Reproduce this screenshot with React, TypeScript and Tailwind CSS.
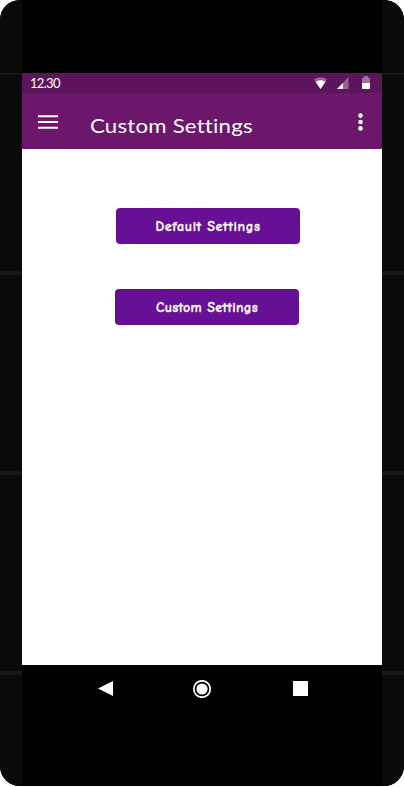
function Bezel() {
  return (
    <div className="flex w-[22px] shrink-0 flex-col bg-[#0a0a0a]">
      <div className="mt-[73px] h-0.5 bg-[#171717]" />
      <div className="mt-[196px] h-1 bg-[#171717]" />
      <div className="mt-[196px] h-1 bg-[#171717]" />
      <div className="mt-[196px] h-1 bg-[#171717]" />
    </div>
  );
}

function StatusBar() {
  return (
    <div className="flex h-5 items-center justify-between bg-[#5c145c] pl-2 pr-3">
      <span className="font-['Lato',sans-serif] text-[13px] leading-5 tracking-[-0.7px] text-white">12.30</span>
      <div className="flex h-5 items-start">
        <svg className="mr-[10px] mt-1 h-[13px] w-[13px]" viewBox="0 0 13 13">
          <path d="M0 2.4Q6.5-2 13 2.4L6.5 12Z" fill="#fff" opacity=".35" />
          <path d="M1.5 4.8Q6.5 1.5 11.5 4.8L6.5 12Z" fill="#fff" />
        </svg>
        <svg className="mr-[13px] mt-1 h-3 w-3" viewBox="0 0 12 12">
          <path d="M0 12L11.5 0V12Z" fill="#fff" opacity=".35" />
          <path d="M0 12L6 6V12Z" fill="#fff" />
        </svg>
        <svg className="mt-[3px] h-[13px] w-2" viewBox="0 0 8 13">
          <path d="M0 2.5Q0 1.5 1 1.5H2V0H6V1.5H7Q8 1.5 8 2.5V7H0Z" fill="#fff" opacity=".4" />
          <path d="M0 7H8V12Q8 13 7 13H1Q0 13 0 12Z" fill="#fff" />
        </svg>
      </div>
    </div>
  );
}

function AppBar() {
  return (
    <header className="flex h-14 items-start bg-[#6c176c] pl-4 pr-[19px] text-white">
      <button aria-label="Menu" className="mt-[22px]">
        <svg className="block h-[14px] w-5" viewBox="0 0 20 14">
          <path d="M0 1.3H20M0 7H20M0 12.7H20" stroke="#fff" strokeWidth="2" />
        </svg>
      </button>
      <h1 className="ml-8 mt-[18px] origin-left scale-x-[1.11] whitespace-nowrap font-['Lato',sans-serif] text-[20px] leading-7 tracking-[0.2px]">
        Custom Settings
      </h1>
      <button aria-label="More" className="ml-auto mt-5">
        <svg className="block h-[18px] w-[5px]" viewBox="0 0 5 18">
          <circle cx="2.5" cy="2.6" r="2.3" fill="#fff" />
          <circle cx="2.5" cy="9" r="2.3" fill="#fff" />
          <circle cx="2.5" cy="15.4" r="2.3" fill="#fff" />
        </svg>
      </button>
    </header>
  );
}

const buttonClass =
  "flex h-9 w-[184px] items-center justify-center rounded-[4px] bg-[#671096] font-['Comic_Sans_MS','Comic_Neue','Lato',sans-serif] text-[14px] font-bold text-white [-webkit-text-stroke:0.3px_white]";

function NavBar() {
  return (
    <nav className="flex h-[121px] items-start bg-black pl-[75px] pt-[15px]">
      <svg className="mt-px h-[15px] w-4" viewBox="0 0 16 15">
        <path d="M1 7.5L16 0V15Z" fill="#fff" />
      </svg>
      <svg className="ml-[79px] h-[18px] w-[19px]" viewBox="0 0 19 18">
        <circle cx="10" cy="9" r="8.2" fill="none" stroke="#fff" strokeWidth="1.7" />
        <circle cx="10" cy="9" r="5.6" fill="#fff" />
      </svg>
      <div className="ml-[82px] mt-px h-[15px] w-[15px] bg-white" />
    </nav>
  );
}

export default function App() {
  return (
    <div className="h-[787px] w-[404px] bg-white">
      <div className="flex h-[786px] overflow-hidden rounded-[20px] bg-black">
        <Bezel />
        <div className="flex w-[360px] flex-col bg-black pt-[73px]">
          <StatusBar />
          <AppBar />
          <main className="flex flex-1 flex-col items-start gap-[45px] bg-white pl-[93px] pt-[59px]">
            <button className={`${buttonClass} ml-px tracking-[0.6px]`}>Default Settings</button>
            <button className={`${buttonClass} tracking-[0.3px]`}>Custom Settings</button>
          </main>
          <NavBar />
        </div>
        <Bezel />
      </div>
    </div>
  );
}
